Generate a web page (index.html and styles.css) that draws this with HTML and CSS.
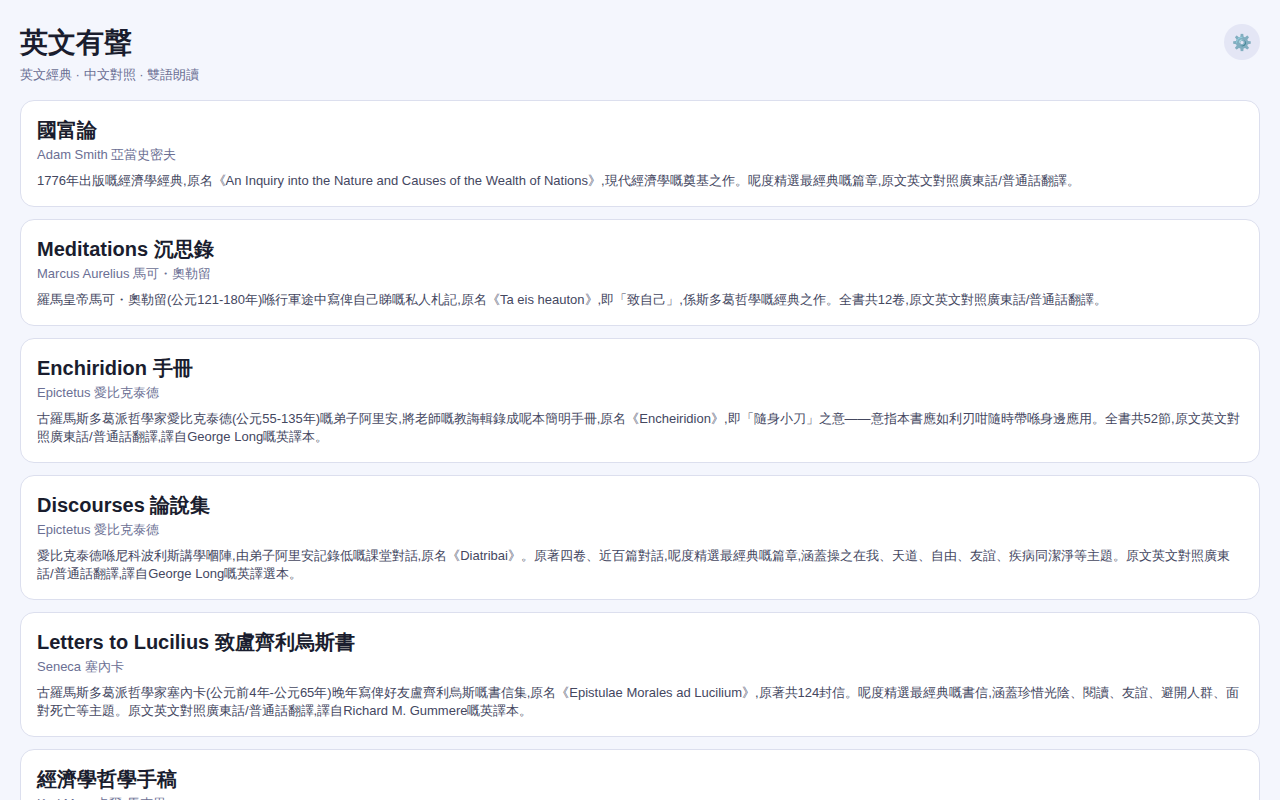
FILE: index.html
```html
<!DOCTYPE html>
<html lang="zh-Hant">
<head>
<meta charset="utf-8">
<meta name="viewport" content="width=device-width, initial-scale=1">
<title>英文有聲</title>
<link rel="stylesheet" href="styles.css">
</head>
<body>
<header class="header">
  <div class="heading">
    <h1 class="title">英文有聲</h1>
    <p class="subtitle">英文經典 · 中文對照 · 雙語朗讀</p>
  </div>
  <button class="settings" type="button">⚙️</button>
</header>
<main class="books">
  <a class="book" href="#wealth">
    <h2 class="name">國富論</h2>
    <p class="author">Adam Smith 亞當史密夫</p>
    <p class="desc">1776年出版嘅經濟學經典,原名《An Inquiry into the Nature and Causes of the Wealth of Nations》,現代經濟學嘅奠基之作。呢度精選最經典嘅篇章,原文英文對照廣東話/普通話翻譯。</p>
  </a>
  <a class="book" href="#meditations">
    <h2 class="name">Meditations 沉思錄</h2>
    <p class="author">Marcus Aurelius 馬可・奧勒留</p>
    <p class="desc">羅馬皇帝馬可・奧勒留(公元121-180年)喺行軍途中寫俾自己睇嘅私人札記,原名《Ta eis heauton》,即「致自己」,係斯多葛哲學嘅經典之作。全書共12卷,原文英文對照廣東話/普通話翻譯。</p>
  </a>
  <a class="book" href="#enchiridion">
    <h2 class="name">Enchiridion 手冊</h2>
    <p class="author">Epictetus 愛比克泰德</p>
    <p class="desc">古羅馬斯多葛派哲學家愛比克泰德(公元55-135年)嘅弟子阿里安,將老師嘅教誨輯錄成呢本簡明手冊,原名《Encheiridion》,即「隨身小刀」之意——意指本書應如利刃咁隨時帶喺身邊應用。全書共52節,原文英文對照廣東話/普通話翻譯,譯自George Long嘅英譯本。</p>
  </a>
  <a class="book" href="#discourses">
    <h2 class="name">Discourses 論說集</h2>
    <p class="author">Epictetus 愛比克泰德</p>
    <p class="desc">愛比克泰德喺尼科波利斯講學嗰陣,由弟子阿里安記錄低嘅課堂對話,原名《Diatribai》。原著四卷、近百篇對話,呢度精選最經典嘅篇章,涵蓋操之在我、天道、自由、友誼、疾病同潔淨等主題。原文英文對照廣東話/普通話翻譯,譯自George Long嘅英譯選本。</p>
  </a>
  <a class="book" href="#letters">
    <h2 class="name">Letters to Lucilius 致盧齊利烏斯書</h2>
    <p class="author">Seneca 塞內卡</p>
    <p class="desc">古羅馬斯多葛派哲學家塞內卡(公元前4年-公元65年)晚年寫俾好友盧齊利烏斯嘅書信集,原名《Epistulae Morales ad Lucilium》,原著共124封信。呢度精選最經典嘅書信,涵蓋珍惜光陰、閱讀、友誼、避開人群、面對死亡等主題。原文英文對照廣東話/普通話翻譯,譯自Richard M. Gummere嘅英譯本。</p>
  </a>
  <a class="book" href="#manuscripts">
    <h2 class="name">經濟學哲學手稿</h2>
    <p class="author">Karl Marx 卡爾·馬克思</p>
  </a>
</main>
</body>
</html>
```
FILE: styles.css
```css
* { box-sizing: border-box; }
body {
  margin: 0;
  background: #f4f6fd;
  color: #1a1d2e;
  font-family: "Liberation Sans", sans-serif;
}
h1, h2, p { margin: 0; }
.header {
  display: flex;
  justify-content: space-between;
  align-items: flex-start;
  padding: 24px 20px 16px;
}
.title { font-size: 28px; line-height: 38px; }
.subtitle { margin-top: 4px; font-size: 13px; line-height: 18px; color: #6b6f94; }
.settings {
  width: 36px;
  height: 36px;
  padding: 0;
  border: 0;
  border-radius: 50%;
  background: #e4e6f5;
  color: inherit;
  font-family: inherit;
  font-size: 16px;
}
.books { display: flex; flex-direction: column; gap: 12px; padding: 0 20px 24px; }
.book {
  display: block;
  padding: 16px;
  border: 1px solid #dcdfee;
  border-radius: 14px;
  background: #fff;
  color: inherit;
  text-decoration: none;
}
.name { font-size: 20px; line-height: 26px; }
.author { margin-top: 3px; font-size: 13px; line-height: 18px; color: #6b6f94; }
.desc { margin-top: 8px; font-size: 13px; line-height: 18px; color: #44475f; }
::-webkit-scrollbar { display: none; }
```
